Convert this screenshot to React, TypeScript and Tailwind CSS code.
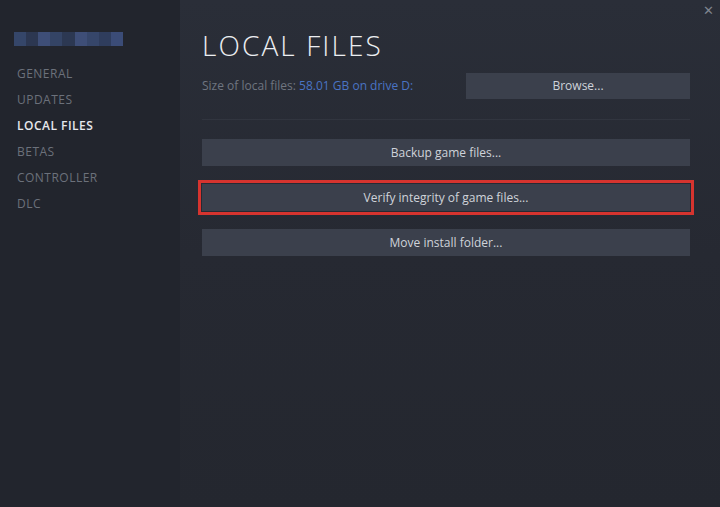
import React from "react";

const menu = ["GENERAL", "UPDATES", "LOCAL FILES", "BETAS", "CONTROLLER", "DLC"];

function Btn({ label, highlight }: { label: string; highlight?: boolean }) {
  return (
    <div
      className={
        "h-[27px] bg-[#3b404c] flex items-center justify-center text-[12px] text-[#cfd3da] " +
        (highlight ? "outline-[3px] outline-solid outline-[#d6342f] outline-offset-[1px]" : "")
      }
    >
      {label}
    </div>
  );
}

export default function App() {
  return (
    <div
      className="w-[720px] h-[507px] flex overflow-hidden"
      style={{ fontFamily: '"Open Sans", "Noto Sans", sans-serif' }}
    >
      <div className="w-[180px] shrink-0 bg-[#22252d] pt-[32px] pl-[14px]">
        <div className="flex h-[14px] w-[109px] opacity-80 blur-[0.6px]">
          <div className="flex-1 bg-[#3a4f78]" />
          <div className="flex-1 bg-[#2f3c5a]" />
          <div className="flex-1 bg-[#45598a]" />
          <div className="flex-1 bg-[#394c74]" />
          <div className="flex-1 bg-[#2f3d5c]" />
          <div className="flex-1 bg-[#46598a]" />
          <div className="flex-1 bg-[#3b4f7a]" />
          <div className="flex-1 bg-[#33436a]" />
          <div className="flex-1 bg-[#42568a]" />
        </div>
        <div className="mt-[15px] flex flex-col pl-[3px]">
          {menu.map((m) => (
            <div
              key={m}
              className={
                "h-[26px] flex items-center text-[12px] tracking-[0.04em] " +
                (m === "LOCAL FILES" ? "text-[#e6e8ec] font-semibold" : "text-[#6c717b]")
              }
            >
              {m}
            </div>
          ))}
        </div>
      </div>
      <div className="flex-1 bg-gradient-to-b from-[#2a2e38] via-[#262932] to-[#24272f] pl-[22px] pr-[30px] pt-[28px] relative">
        <div className="absolute right-[6px] top-[4px] text-[#7f848e] text-[13px] leading-none">✕</div>
        <div className="text-[28px] leading-[34px] font-light tracking-[0.075em] text-[#eceef1]">
          LOCAL FILES
        </div>
        <div className="mt-[11px] flex items-center justify-between">
          <div className="text-[12px] text-[#6f7580]">
            Size of local files: <span className="text-[#4a74c4]">58.01 GB on drive D:</span>
          </div>
          <div className="w-[224px] h-[26px] bg-[#3b404c] flex items-center justify-center text-[12px] text-[#cfd3da]">
            Browse...
          </div>
        </div>
        <div className="mt-[20px] h-px bg-[#31353f]" />
        <div className="mt-[19px] flex flex-col gap-[18px]">
          <Btn label="Backup game files..." />
          <Btn label="Verify integrity of game files..." highlight />
          <Btn label="Move install folder..." />
        </div>
      </div>
    </div>
  );
}
